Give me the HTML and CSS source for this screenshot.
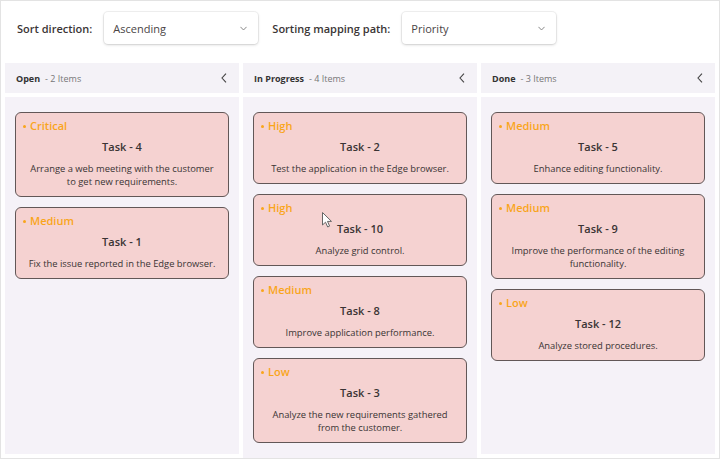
FILE: index.html
```html
<!DOCTYPE html>
<html>
<head>
<meta charset="utf-8">
<title>Kanban</title>
<link rel="stylesheet" href="styles.css">
</head>
<body>
<div class="app">
  <div class="toolbar">
    <span class="tb-label">Sort direction:</span>
    <div class="combo"><span>Ascending</span><svg class="combo-chev" viewBox="0 0 8 5"><path d="M0.5 0.6 L4 4.2 L7.5 0.6"/></svg></div>
    <span class="tb-label">Sorting mapping path:</span>
    <div class="combo"><span>Priority</span><svg class="combo-chev" viewBox="0 0 8 5"><path d="M0.5 0.6 L4 4.2 L7.5 0.6"/></svg></div>
  </div>
  <div class="board">
    <section class="col">
      <header class="col-head"><span class="col-title">Open</span><span class="col-count">- 2 Items</span><svg class="col-chev" viewBox="0 0 6 10"><path d="M5 0.7 L1 5 L5 9.3"/></svg></header>
      <div class="col-body">
        <article class="card"><div class="prio">Critical</div><div class="title">Task - 4</div><div class="desc">Arrange a web meeting with the customer to get new requirements.</div></article>
        <article class="card"><div class="prio">Medium</div><div class="title">Task - 1</div><div class="desc">Fix the issue reported in the Edge browser.</div></article>
      </div>
    </section>
    <section class="col">
      <header class="col-head"><span class="col-title">In Progress</span><span class="col-count">- 4 Items</span><svg class="col-chev" viewBox="0 0 6 10"><path d="M5 0.7 L1 5 L5 9.3"/></svg></header>
      <div class="col-body">
        <article class="card"><div class="prio">High</div><div class="title">Task - 2</div><div class="desc">Test the application in the Edge browser.</div></article>
        <article class="card"><div class="prio">High</div><div class="title">Task - 10</div><div class="desc">Analyze grid control.</div></article>
        <article class="card"><div class="prio">Medium</div><div class="title">Task - 8</div><div class="desc">Improve application performance.</div></article>
        <article class="card"><div class="prio">Low</div><div class="title">Task - 3</div><div class="desc">Analyze the new requirements gathered from the customer.</div></article>
      </div>
    </section>
    <section class="col">
      <header class="col-head"><span class="col-title">Done</span><span class="col-count">- 3 Items</span><svg class="col-chev" viewBox="0 0 6 10"><path d="M5 0.7 L1 5 L5 9.3"/></svg></header>
      <div class="col-body">
        <article class="card"><div class="prio">Medium</div><div class="title">Task - 5</div><div class="desc">Enhance editing functionality.</div></article>
        <article class="card"><div class="prio">Medium</div><div class="title">Task - 9</div><div class="desc">Improve the performance of the editing functionality.</div></article>
        <article class="card"><div class="prio">Low</div><div class="title">Task - 12</div><div class="desc">Analyze stored procedures.</div></article>
      </div>
    </section>
  </div>
  <svg class="cursor" viewBox="0 0 11 16"><path d="M0.5 0.5 L0.5 13 L3.5 10.2 L5.7 15 L7.6 14.1 L5.5 9.4 L9.5 9.4 Z"/></svg>
</div>
</body>
</html>
```
FILE: styles.css
```css
html, body {
  margin: 0;
  padding: 0;
}
body {
  font-family: "Open Sans", "Noto Sans", sans-serif;
  color: #333;
  background: #fff;
}
.app {
  position: relative;
  box-sizing: border-box;
  width: 720px;
  height: 459px;
  border: 1px solid #e3e3e3;
  padding: 11px 4px 4px;
  display: flex;
  flex-direction: column;
}
.toolbar {
  display: flex;
  align-items: center;
  padding-left: 12px;
  height: 32px;
  flex: none;
}
.tb-label {
  font-weight: 600;
  font-size: 11px;
  color: #3a3535;
  margin-right: 12px;
}
.combo {
  box-sizing: border-box;
  width: 154px;
  height: 32px;
  background: #fff;
  border-radius: 4px;
  box-shadow: 0 0 0 1px rgba(0,0,0,0.05), 0 1px 3px rgba(0,0,0,0.16);
  display: flex;
  align-items: center;
  justify-content: space-between;
  padding: 0 11px 0 9px;
  font-size: 11px;
  color: #4a4545;
  margin-right: 14px;
}
.combo-chev {
  width: 7px;
  height: 5px;
  fill: none;
  stroke: #777;
  stroke-width: 1;
}
.board {
  flex: 1;
  min-height: 0;
  margin-top: 19px;
  display: grid;
  grid-template-columns: repeat(3, 1fr);
  gap: 4px;
}
.col {
  display: flex;
  flex-direction: column;
  gap: 4px;
  min-height: 0;
}
.col-head {
  height: 30px;
  flex: none;
  background: #f4f2f7;
  display: flex;
  align-items: center;
  padding: 0 12px 0 11px;
  font-size: 9px;
}
.col-title {
  font-weight: 700;
  color: #333;
}
.col-count {
  color: #777;
  margin-left: 5px;
}
.col-chev {
  margin-left: auto;
  width: 6px;
  height: 10px;
  fill: none;
  stroke: #444;
  stroke-width: 1.1;
}
.col-body {
  flex: 1;
  background: #f5f2f8;
  padding: 15px 10px;
  display: flex;
  flex-direction: column;
  gap: 10px;
}
.card {
  background: #f5d2d1;
  border: 1px solid #625757;
  border-radius: 6px;
  padding: 6px 6px 8px;
}
.prio {
  color: #f9a51b;
  font-weight: 600;
  font-size: 11px;
  line-height: 14px;
  display: flex;
  align-items: center;
}
.prio::before {
  content: "";
  width: 3px;
  height: 3px;
  border-radius: 50%;
  background: currentColor;
  margin: 0 4px 0 1px;
}
.title {
  text-align: center;
  font-weight: 600;
  font-size: 11px;
  line-height: 16px;
  margin-top: 6px;
  color: #3a3434;
}
.desc {
  text-align: center;
  font-size: 9.4px;
  line-height: 13px;
  margin-top: 7px;
  padding: 0 5px;
  color: #3a3434;
}
.cursor {
  position: absolute;
  left: 321px;
  top: 211px;
  width: 11px;
  height: 16px;
  fill: #fff;
  stroke: #666;
  stroke-width: 1;
}
```
